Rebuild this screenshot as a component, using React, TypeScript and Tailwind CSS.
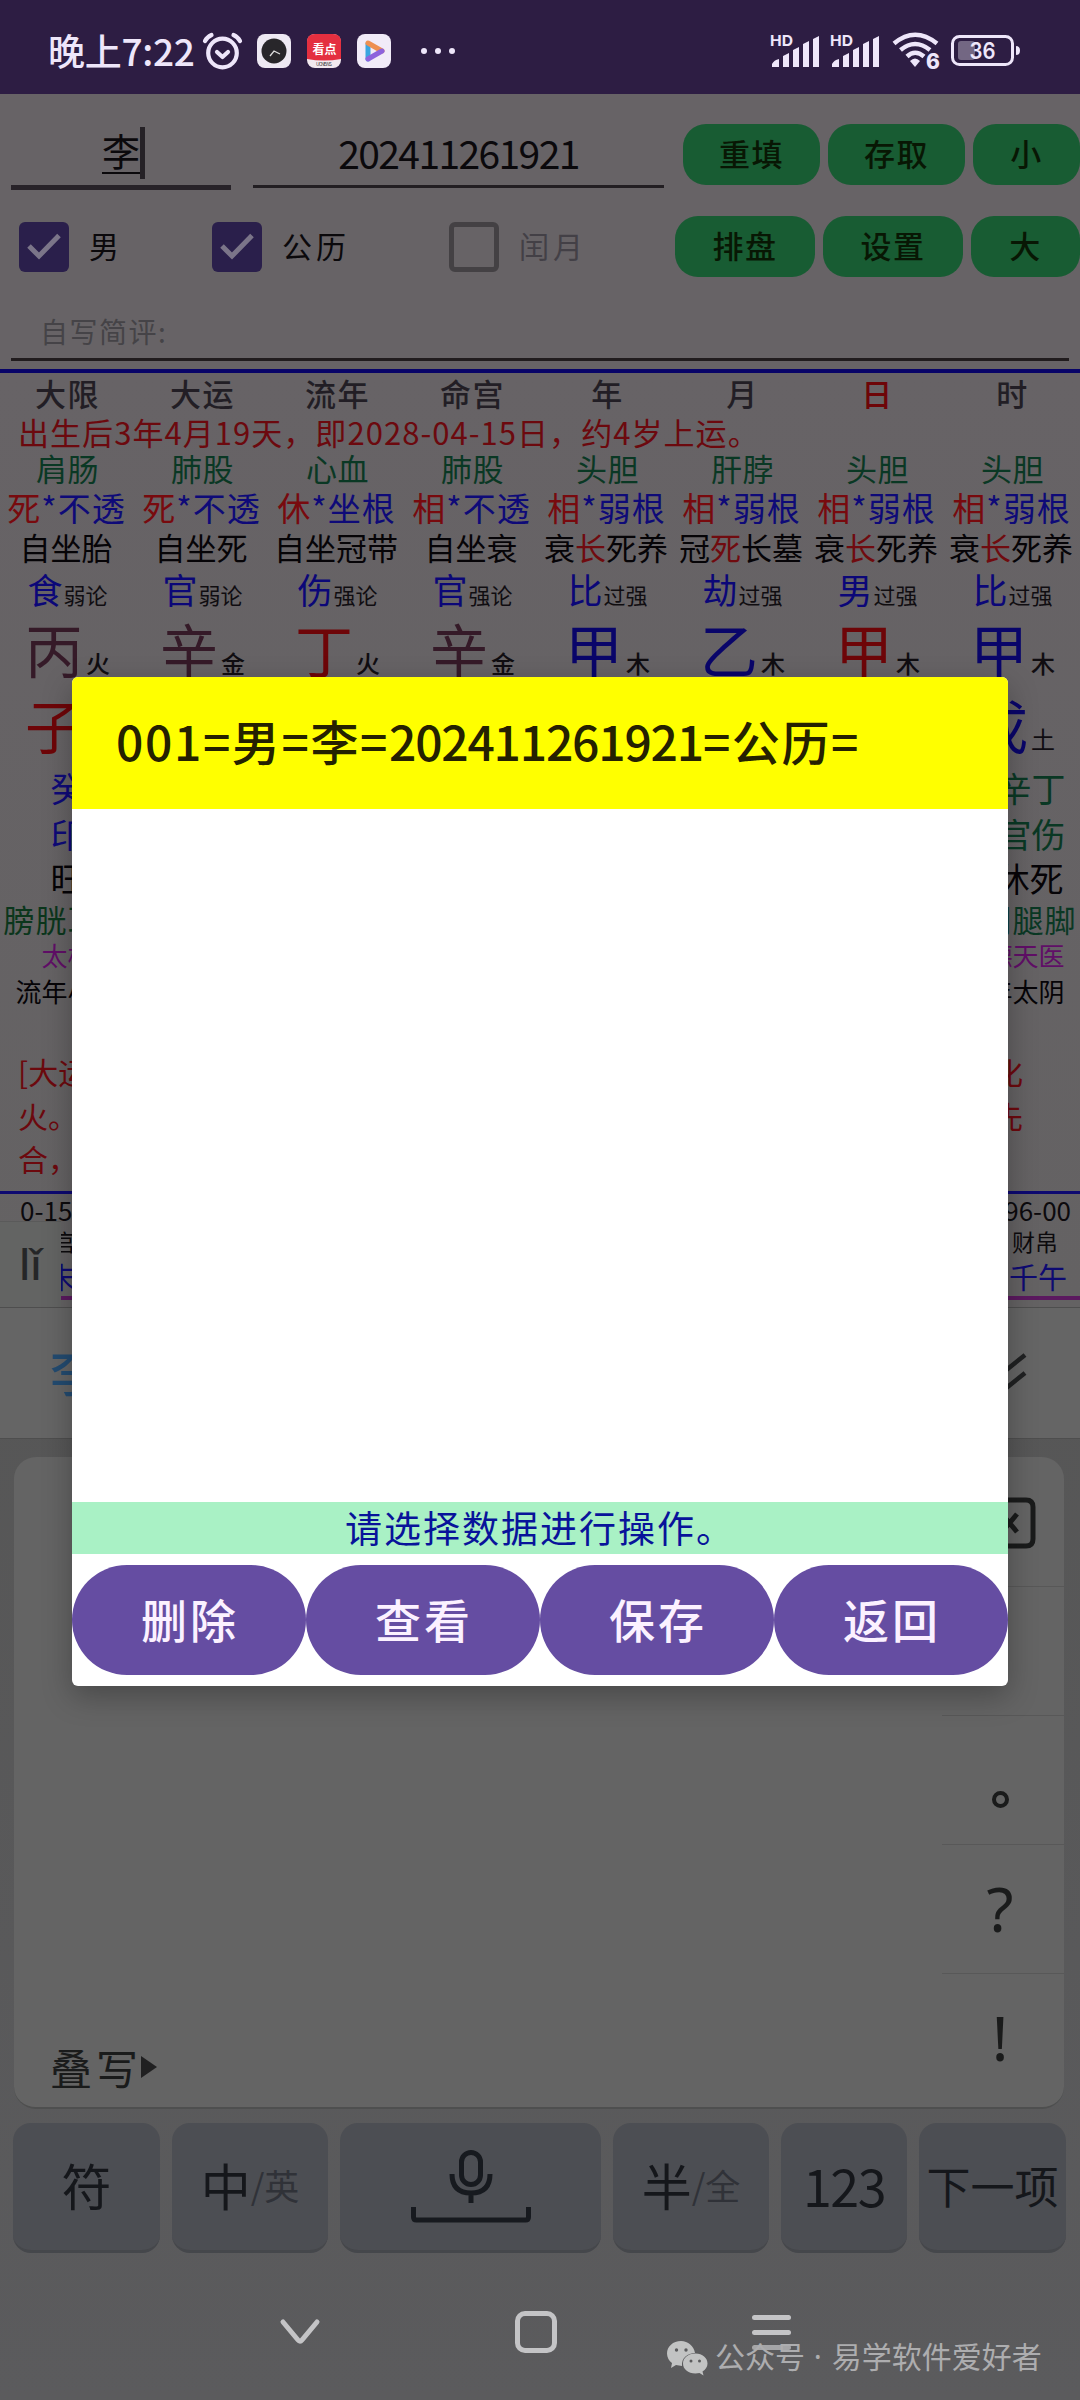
import { clsx } from 'clsx';

interface Pillar {
    title: string;
    organ: string;
    state: string;
    root: string;
    seat: string;
    hot?: string;
    god: string;
    level: string;
    stem: string;
    element: string;
    stemColor: string;
}

const pillars: Pillar[] = [
    { title: '大限', organ: '肩肠', state: '死', root: '不透', seat: '自坐胎', god: '食', level: '弱论', stem: '丙', element: '火', stemColor: 'text-[#351a28]' },
    { title: '大运', organ: '肺股', state: '死', root: '不透', seat: '自坐死', god: '官', level: '弱论', stem: '辛', element: '金', stemColor: 'text-[#351a28]' },
    { title: '流年', organ: '心血', state: '休', root: '坐根', seat: '自坐冠带', god: '伤', level: '强论', stem: '丁', element: '火', stemColor: 'text-[#6e0508]' },
    { title: '命宫', organ: '肺股', state: '相', root: '不透', seat: '自坐衰', god: '官', level: '强论', stem: '辛', element: '金', stemColor: 'text-[#351a28]' },
    { title: '年', organ: '头胆', state: '相', root: '弱根', seat: '衰长死养', hot: '长', god: '比', level: '过强', stem: '甲', element: '木', stemColor: 'text-[#09056a]' },
    { title: '月', organ: '肝脖', state: '相', root: '弱根', seat: '冠死长墓', hot: '死', god: '劫', level: '过强', stem: '乙', element: '木', stemColor: 'text-[#09056a]' },
    { title: '日', organ: '头胆', state: '相', root: '弱根', seat: '衰长死养', hot: '长', god: '男', level: '过强', stem: '甲', element: '木', stemColor: 'text-[#6e0508]' },
    { title: '时', organ: '头胆', state: '相', root: '弱根', seat: '衰长死养', hot: '长', god: '比', level: '过强', stem: '甲', element: '木', stemColor: 'text-[#09056a]' },
];

function Signal() {
    return (
        <svg width="50" height="42" viewBox="0 -4 50 42" fill="#eee6fa">
            <text x="0" y="12" fontSize="15" fontWeight="700" fontFamily="Inter, sans-serif" textLength="23" lengthAdjust="spacingAndGlyphs">HD</text>
            <path d="M2 33v-3q2-4 7-5v8zM13 33V22l6-3v14zM23 33V16l6-3v20zM33 33V10l6-3v26zM43 33V5l6-3v31z" />
        </svg>
    );
}

function StatusBar() {
    return (
        <div className="flex h-[94px] shrink-0 items-center bg-[#2d1d43] pl-[48px] pt-2 text-[#eee6fa]">
            <span className="w-[151px] whitespace-nowrap pb-[3px] text-[37px] leading-[40px] tracking-[-0.300px] font-medium">晚上7:22</span>
            <svg className="ml-[3px]" width="41" height="40" viewBox="0 0 41 40" fill="none" stroke="#eee6fa" strokeWidth="4.2" strokeLinecap="round" strokeLinejoin="round">
                <circle cx="20.500" cy="22" r="14.300" />
                <path d="M15 21l5.500 5 5.500-5M3 10q2-4 6.500-6M38 10q-2-4-6.500-6" />
            </svg>
            <svg className="ml-[14px]" width="34" height="34" viewBox="0 0 34 34">
                <rect width="34" height="34" rx="8" fill="#eee9f3" />
                <circle cx="17" cy="17" r="12.500" fill="#28262a" />
                <path d="M13 22l4-5 6 3" fill="none" stroke="#ddd" strokeWidth="1.300" />
            </svg>
            <svg className="ml-4" width="34" height="34" viewBox="0 0 34 34">
                <rect width="34" height="34" rx="8" fill="#f2e9ef" />
                <path d="M0 25V8q0-8 8-8h18q8 0 8 8v17q-17 3-34 0z" fill="#e42f3f" />
                <text x="5.500" y="20" fontSize="12" fontWeight="700" fill="#fff">看点</text>
                <text x="9" y="31.500" fontSize="5" fill="#444" textLength="16">UCNEWS</text>
            </svg>
            <svg className="ml-4" width="34" height="34" viewBox="0 0 34 34" fill="none" strokeLinejoin="round" strokeLinecap="round" strokeWidth="5">
                <rect width="34" height="34" rx="8" fill="#f1ebf8" />
                <path d="M11 25V10" stroke="#3aa5df" />
                <path d="M11 9l14 8" stroke="#ee8f50" />
                <path d="M25 17l-14 8" stroke="#8d62dc" />
            </svg>
            <svg className="ml-[30px]" width="34" height="8" viewBox="0 0 34 8" fill="#eee6fa">
                <circle cx="3" cy="4" r="3" />
                <circle cx="17" cy="4" r="3" />
                <circle cx="31" cy="4" r="3" />
            </svg>
            <div className="ml-auto flex items-center pr-[59px]">
                <Signal />
                <div className="w-[10px]" />
                <Signal />
                <svg className="ml-[12px]" width="49" height="48" viewBox="0 -4 49 48" fill="none" stroke="#eee6fa" strokeWidth="4.500">
                    <path d="M2 12.500Q23 -5 45 12.500M8.500 19Q23 7 38 19M15 25.500Q23 18 32 25.500" />
                    <path d="M18 30q5-5 10 0l-5 6z" fill="#eee6fa" stroke="none" />
                    <text x="34" y="38" fontSize="21" fontWeight="800" fontFamily="Inter, sans-serif" fill="#eee6fa" stroke="none">6</text>
                </svg>
                <svg className="ml-[10px]" width="70" height="32" viewBox="0 0 70 32">
                    <rect x="1.500" y="1.500" width="60" height="28" rx="7" fill="none" stroke="#eee6fa" strokeWidth="3" />
                    <rect x="7" y="6" width="17" height="19" rx="3" fill="#736783" />
                    <path d="M65 11q4 0 4 4.500t-4 4.500z" fill="#eee6fa" />
                    <text x="31.500" y="24" fontSize="23" fontWeight="600" textAnchor="middle" fontFamily="Inter, sans-serif" fill="#eee6fa" textLength="26" lengthAdjust="spacingAndGlyphs">36</text>
                </svg>
            </div>
        </div>
    );
}

function GreenButton({ label, className }: { label: string; className: string }) {
    return (
        <button className={clsx('h-[61px] shrink-0 rounded-[23px] bg-[#185c33] pb-[3px] text-[31px] leading-[40px] tracking-[1.5px] font-medium text-[#081704]', className)}>
            {label}
        </button>
    );
}

function CheckBox({ checked, label, className }: { checked?: boolean; label: string; className: string }) {
    return (
        <label className={clsx('flex shrink-0 items-center', className)}>
            <span className={clsx('flex size-[50px] items-center justify-center rounded-[6px]', checked ? 'bg-[#2a1f4b]' : 'border-[5px] border-[#444144]')}>
                {checked && (
                    <svg width="34" height="28" viewBox="0 0 34 28" fill="none" stroke="#7b7589" strokeWidth="5">
                        <path d="M2 13l10 10L32 2.500" />
                    </svg>
                )}
            </span>
            <span className={clsx('ml-[20px] pb-[3px] text-[30px] leading-[40px] tracking-[4px]', checked ? 'text-[#0b090c]' : 'text-[#434046]')}>{label}</span>
        </label>
    );
}

function Form() {
    return (
        <div className="h-[275px] shrink-0 pt-[30px]">
            <div className="flex h-[67px] items-start">
                <div className="ml-[11px] flex h-[66px] w-[220px] items-start justify-center border-b-[5px] border-[#282329] pt-[3px]">
                    <span className="ml-[5px] h-[47px] border-b-[2px] border-[#0b090c] text-[38px] leading-[46px] text-[#0b090c]">李</span>
                    <span className="h-[52px] w-[5px] bg-[#252126]" />
                </div>
                <div className="ml-[22px] h-[64px] w-[411px] border-b-[3px] border-[#221e22] text-center text-[39px] leading-[56px] tracking-[-1.600px] text-[#0b090c]">202411261921</div>
                <GreenButton label="重填" className="ml-[19px] w-[137px]" />
                <GreenButton label="存取" className="ml-2 w-[137px]" />
                <GreenButton label="小" className="ml-2 w-[107px]" />
            </div>
            <div className="mt-[25px] flex h-[61px] items-center">
                <CheckBox checked label="男" className="ml-[19px] w-[193px]" />
                <CheckBox checked label="公历" className="w-[237px]" />
                <CheckBox label="闰月" className="w-[226px]" />
                <GreenButton label="排盘" className="w-[140px]" />
                <GreenButton label="设置" className="ml-2 w-[140px]" />
                <GreenButton label="大" className="ml-2 w-[109px]" />
            </div>
            <div className="mx-[11px] mt-[22px] h-[62px] border-b-[3px] border-[#211c1e] pl-[29px] pt-2 text-[28px] leading-[48px] tracking-[1.500px] text-[#454347]">自写简评:</div>
        </div>
    );
}

function Edge({ left, right, className }: { left: string; right: string; className: string }) {
    return (
        <div className={clsx('flex justify-between', className)}>
            <span className="w-[135px] text-center whitespace-nowrap">{left}</span>
            <span className="w-[135px] text-center whitespace-nowrap">{right}</span>
        </div>
    );
}

function Chart() {
    return (
        <div className="relative h-[938px] shrink-0 overflow-hidden border-t-[4px] border-[#080468] bg-linear-to-b from-[#676366] to-[#646263]">
            <div className="-mt-px mb-px grid h-[41px] grid-cols-8 text-center text-[31px] leading-[41px] tracking-[1.500px] font-medium">
                {pillars.map((p) => (
                    <span key={p.title} className={p.title === '日' ? 'text-[#6e0508]' : 'text-[#221e25]'}>{p.title}</span>
                ))}
            </div>
            <div className="h-[36px] pl-[18px] text-[31px] leading-[36px] whitespace-nowrap tracking-[1.050px] text-[#6c090e]">出生后3年4月19天，即2028-04-15日，约4岁上运。</div>
            <div className="grid grid-cols-8 text-center">
                {pillars.map((p) => (
                    <div key={p.title} className="whitespace-nowrap">
                        <div className="h-[37px] text-[31px] leading-[35px] tracking-[0.500px] text-[#0a3824]">{p.organ}</div>
                        <div className="h-[42px] pr-[2px] text-[33px] leading-[41px] tracking-[1px] text-[#0e0a78]">
                            <span className="text-[#780a0e]">{p.state}</span>*{p.root}
                        </div>
                        <div className="h-[37px] pr-[3px] text-[31px] leading-[35px] text-[#060407]">
                            {p.seat.split('').map((c, i) => (
                                <span key={i} className={c === p.hot ? 'text-[#700b0f]' : ''}>{c}</span>
                            ))}
                        </div>
                        <div className="h-[46px] text-[35px] leading-[45px] text-[#0b0778]">
                            {p.god}<span className="ml-px text-[22px] text-[#100d11]">{p.level}</span>
                        </div>
                        <div className={clsx('h-[75px] text-[58px] leading-[73px]', p.stemColor)}>
                            {p.stem}<span className="ml-[3px] text-[24px] font-medium text-[#100d11]">{p.element}</span>
                        </div>
                    </div>
                ))}
            </div>
            <div className="flex h-[78px] justify-between text-center text-[58px] leading-[75px]">
                <span className="w-[135px] text-[#6e0508]">子<span className="ml-[3px] text-[24px] text-[#100d11]">水</span></span>
                <span className="w-[135px] text-[#09056a]">戌<span className="ml-[3px] text-[24px] text-[#100d11]">土</span></span>
            </div>
            <div className="flex h-[91px] justify-between text-center text-[34px] leading-[45.500px]">
                <div className="w-[135px] text-[#0e0a78]">癸<br />印</div>
                <div className="w-[135px] pl-1 text-[#0a3824]">戊辛丁<br />才官伤</div>
            </div>
            <Edge left="旺" right="囚休死" className="h-[43px] text-[34px] leading-[43px] text-[#060407]" />
            <div className="flex h-[41px] justify-between text-center text-[31px] leading-[40px] tracking-[1px] whitespace-nowrap">
                <span className="w-[135px] text-[#0b361c]">膀胱耳肾</span>
                <span className="w-[135px] text-[#0a3824]">命门腿脚</span>
            </div>
            <Edge left="太极" right="月德天医" className="h-[30px] text-[26px] leading-[29px] text-[#600e67]" />
            <Edge left="流年小耗" right="流年太阴" className="h-[42px] text-[26px] leading-[41px] text-[#060407]" />
            <div className="mt-[38px] h-[141px] pl-[18px] pr-[57px] text-[30px] leading-[43.500px] text-[#6c090e]">
                <div className="flex justify-between"><span>[大运</span><span>化</span></div>
                <div className="flex justify-between"><span>火。</span><span>先</span></div>
                <div>合，</div>
            </div>
            <div className="h-[3px] bg-[#0d0970]" />
            <div className="h-[102px]">
                <div className="flex h-[34px] justify-between pl-[20px] pr-[9px] text-[26px] leading-[32px] text-[#0c0a0d]">
                    <span>0-15</span><span>96-00</span>
                </div>
                <div className="flex h-[29px] justify-between pl-[53px] pr-[22px] text-[23px] leading-[27px] text-[#0c0a0d]">
                    <span>官</span><span>财帛</span>
                </div>
                <div className="flex h-[39px] justify-between pl-[47px] pr-[13px] text-[29px] leading-[39px] text-[#0e0a72]">
                    <span>未</span><span>千午</span>
                </div>
            </div>
            <div className="h-[4px] bg-[#5b195f]" />
            {/* pinyin composing bubble of the keyboard */}
            <div className="absolute left-0 top-[848px] h-[87px] w-[61px] border-t border-[#5a5a5a] bg-[#636463] pl-[19px] font-['Noto_Sans'] text-[42px] leading-[84px] font-medium text-[#252627]">lǐ</div>
        </div>
    );
}

function Key({ children, className }: { children: React.ReactNode; className: string }) {
    return (
        <div className={clsx('flex h-[130px] shrink-0 items-center justify-center rounded-[18px] border-b-[3px] border-[#45474b] bg-[#4c4e53] whitespace-nowrap text-[#15171b]', className)}>
            {children}
        </div>
    );
}

function Keyboard() {
    return (
        <div className="flex grow flex-col bg-linear-to-b from-[#565656] to-[#5b5b5d]">
            <div className="flex h-[132px] shrink-0 items-center justify-between border-y border-[#4e4e4e] bg-[#656565] pl-[50px] pr-[53px]">
                <span className="pb-[6px] text-[50px] leading-[60px] font-medium text-[#234b70]">李</span>
                <svg width="44" height="40" viewBox="0 0 44 40" fill="none" stroke="#202122" strokeWidth="4.500">
                    <path d="M2 2l20 16L42 2M2 20l20 16 20-16" />
                </svg>
            </div>
            <div className="mt-[18px] ml-[14px] flex h-[652px] w-[1050px] shrink-0 justify-between rounded-[22px] border-b-2 border-[#4e4f4f] bg-[#646464] text-[#1a1b1b]">
                <div className="flex items-center self-end pb-[16px] pl-[36px]">
                    <span className="text-[42px] leading-[48px] tracking-[4px]">叠写</span>
                    <svg className="-ml-px" width="16" height="22" viewBox="0 0 16 22" fill="#202021"><path d="M0 0l16 11L0 22z" /></svg>
                </div>
                <div className="flex w-[122px] flex-col text-center">
                    <div className="flex h-[130px] items-center justify-end border-b border-[#585858] pr-[28px]">
                        <svg className="mt-[2px]" width="60" height="52" viewBox="0 0 60 52" fill="none" stroke="#1a1b1b" strokeWidth="5" strokeLinejoin="round">
                            <path d="M18 3h32q7 0 7 7v32q0 7-7 7H18L3 26zM26 17l15 18M41 17L26 35" />
                        </svg>
                    </div>
                    <div className="h-[129px] border-b border-[#585858]" />
                    <div className="flex h-[129px] items-center justify-center border-b border-[#585858] pt-[39px] pr-[5px]">
                        <span className="size-[17px] rounded-full border-[4px] border-[#1a1b1b]" />
                    </div>
                    <div className="h-[129px] border-b border-[#585858] pr-[6px] font-['Noto_Sans'] text-[62px] leading-[126px]">?</div>
                    <div className="pr-[6px] font-['Noto_Sans'] text-[62px] leading-[126px]">!</div>
                </div>
            </div>
            <div className="mt-[14px] ml-[13px] flex gap-3">
                <Key className="w-[147px]"><span className="pb-1 text-[50px]">符</span></Key>
                <Key className="w-[156px]">
                    <span className="pb-1 text-[50px]">中<span className="relative -top-[6px] text-[35px] text-[#303238]">/英</span></span>
                </Key>
                <Key className="w-[261px]">
                    <svg className="-mt-1" width="122" height="76" viewBox="0 0 122 76" fill="none" stroke="#171a1f" strokeWidth="5">
                        <rect x="51.500" y="5.500" width="19" height="32" rx="9.500" />
                        <path d="M42 27q0 19 19 19t19-19M61 46v10" />
                        <path d="M3.500 60v10q0 3 3 3h109q3 0 3-3V60" />
                    </svg>
                </Key>
                <Key className="w-[156px]">
                    <span className="pb-1 text-[50px]">半<span className="relative -top-[6px] text-[35px] text-[#303238]">/全</span></span>
                </Key>
                <Key className="w-[126px]"><span className="pb-1 text-[52px] tracking-[-1.500px]">123</span></Key>
                <Key className="w-[147px]"><span className="pb-1 text-[44px]">下一项</span></Key>
            </div>
            <div className="relative grow">
                <div className="flex items-center pl-[279px] pt-[57px]">
                    <svg width="42" height="44" viewBox="0 0 42 44" fill="none" stroke="#c4c4c6" strokeWidth="5" strokeLinecap="round" strokeLinejoin="round">
                        <path d="M4 12l15 18q2 2.500 4 0l15-18" />
                    </svg>
                    <span className="ml-[194px] size-[42px] rounded-[10px] border-[5px] border-[#c4c4c6]" />
                    <span className="ml-[195px] flex w-[39px] flex-col gap-[10px]">
                        <i className="h-[5px] rounded-sm bg-[#c4c4c6]" />
                        <i className="h-[5px] rounded-sm bg-[#c4c4c6]" />
                        <i className="h-[5px] rounded-sm bg-[#a5a5a7]" />
                    </span>
                </div>
                <div className="absolute left-[667px] top-[82px] flex items-center text-[#adadaf]">
                    <svg className="mt-1" width="41" height="35" viewBox="0 0 41 35" fill="#c2c3c3">
                        <path d="M14 0C6 0 0 5.500 0 12.500c0 4 2 7.300 5 9.500l-1 5 5-3 6 1c-1-8 6-13 13-13C27 5 21 0 14 0z" />
                        <path d="M28.500 12.500C21 12.500 16 17 16 22.500S21 32.500 28.500 32.500l4-.5 4 2.500-1-4c3-2 5-4.500 5-8 0-5.500-5-10-12-10z" />
                        <g fill="#5b5b5d">
                            <circle cx="9.500" cy="9" r="1.700" /><circle cx="19" cy="9" r="1.700" />
                            <circle cx="24" cy="20" r="1.500" /><circle cx="32.500" cy="20" r="1.500" />
                        </g>
                    </svg>
                    <span className="ml-[7px] text-[30px] leading-[40px] whitespace-nowrap">公众号<span className="font-['Noto_Sans'] tracking-[1px]"> · </span>易学软件爱好者</span>
                </div>
            </div>
        </div>
    );
}

function RecordDialog() {
    return (
        <div className="absolute left-[72px] top-[677px] flex h-[1009px] w-[936px] flex-col overflow-hidden rounded-[6px] bg-white shadow-[0_10px_30px_rgba(0,0,0,0.28)]">
            <div className="h-[132px] bg-[#ffff00] pl-[44px] text-[48px] leading-[127px] tracking-[1.600px] font-medium whitespace-nowrap text-[#252100]">
                001=男=李=<span className="tracking-[-1.200px]">202411261921</span>=公历=
            </div>
            <div className="grow" />
            <div className="h-[52px] bg-[#a9f1c5] text-center text-[37px] leading-[50px] tracking-[2px] text-[#08139a]">请选择数据进行操作。</div>
            <div className="my-[11px] grid grid-cols-4">
                {['删除', '查看', '保存', '返回'].map((label) => (
                    <button key={label} className="h-[110px] rounded-full bg-[#654da2] pb-[5px] pl-[2px] text-[46px] leading-[60px] tracking-[3px] font-medium text-[#fbf1ff]">{label}</button>
                ))}
            </div>
        </div>
    );
}

export default function App() {
    return (
        <div className="relative flex h-[2400px] w-[1080px] flex-col overflow-hidden bg-[#676366] font-['Noto_Sans_CJK_SC',sans-serif]">
            <StatusBar />
            <Form />
            <Chart />
            <Keyboard />
            <RecordDialog />
        </div>
    );
}
